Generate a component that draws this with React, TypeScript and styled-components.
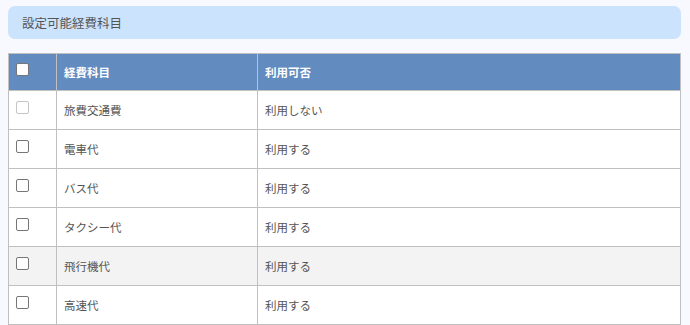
import React from 'react';
import styled, { createGlobalStyle } from 'styled-components';

const GlobalStyle = createGlobalStyle`
  html, body {
    margin: 0;
    padding: 0;
    background: #f8f8ff;
    overflow: hidden;
  }
  body {
    font-family: "Noto Sans CJK JP", "Noto Sans", sans-serif;
  }
`;

const Page = styled.div`
  display: flex;
  flex-direction: column;
  gap: 14px;
  padding: 6px 9px 0 8px;
`;

// Section title bar
const TitleBar = styled.div`
  height: 33px;
  display: flex;
  align-items: center;
  padding: 0 14px;
  background: #cce3fd;
  border-radius: 7px;
  color: #555;
  font-size: 12.5px;
`;

const Table = styled.table`
  width: 100%;
  border-collapse: collapse;
  table-layout: fixed;
  border: 1px solid #c0c0c0;
  font-size: 11.5px;
`;

const HeadCell = styled.th<{ $width?: number }>`
  box-sizing: border-box;
  width: ${(p) => (p.$width ? `${p.$width}px` : 'auto')};
  height: 37px;
  padding: 0 7px;
  background: #628bbf;
  color: #fff;
  font-weight: bold;
  text-align: left;
  vertical-align: middle;
  border: 1px solid #c0c0c0;
`;

const Row = styled.tr<{ $hover?: boolean }>`
  background: ${(p) => (p.$hover ? '#f3f3f3' : '#fff')};
`;

const Cell = styled.td`
  height: 38px;
  padding: 0 7px;
  color: #555;
  vertical-align: middle;
  border: 1px solid #c0c0c0;
`;

const Check = styled.input.attrs({ type: 'checkbox' })`
  appearance: none;
  display: block;
  box-sizing: border-box;
  width: 13px;
  height: 13px;
  margin: 0 0 5px 0;
  background: #fff;
  border: 1px solid #767676;
  border-radius: 2px;

  &:disabled {
    border-color: #c5c5c5;
  }
`;

const rows = [
  { name: '旅費交通費', usage: '利用しない', disabled: true },
  { name: '電車代', usage: '利用する' },
  { name: 'バス代', usage: '利用する' },
  { name: 'タクシー代', usage: '利用する' },
  { name: '飛行機代', usage: '利用する', hover: true },
  { name: '高速代', usage: '利用する' },
];

export default function App() {
  return (
    <>
      <GlobalStyle />
      <Page>
        <TitleBar>設定可能経費科目</TitleBar>
        <Table>
          <thead>
            <tr>
              <HeadCell $width={48}>
                <Check />
              </HeadCell>
              <HeadCell $width={201}>経費科目</HeadCell>
              <HeadCell>利用可否</HeadCell>
            </tr>
          </thead>
          <tbody>
            {rows.map((r) => (
              <Row key={r.name} $hover={r.hover}>
                <Cell>
                  <Check disabled={r.disabled} />
                </Cell>
                <Cell>{r.name}</Cell>
                <Cell>{r.usage}</Cell>
              </Row>
            ))}
          </tbody>
        </Table>
      </Page>
    </>
  );
}
